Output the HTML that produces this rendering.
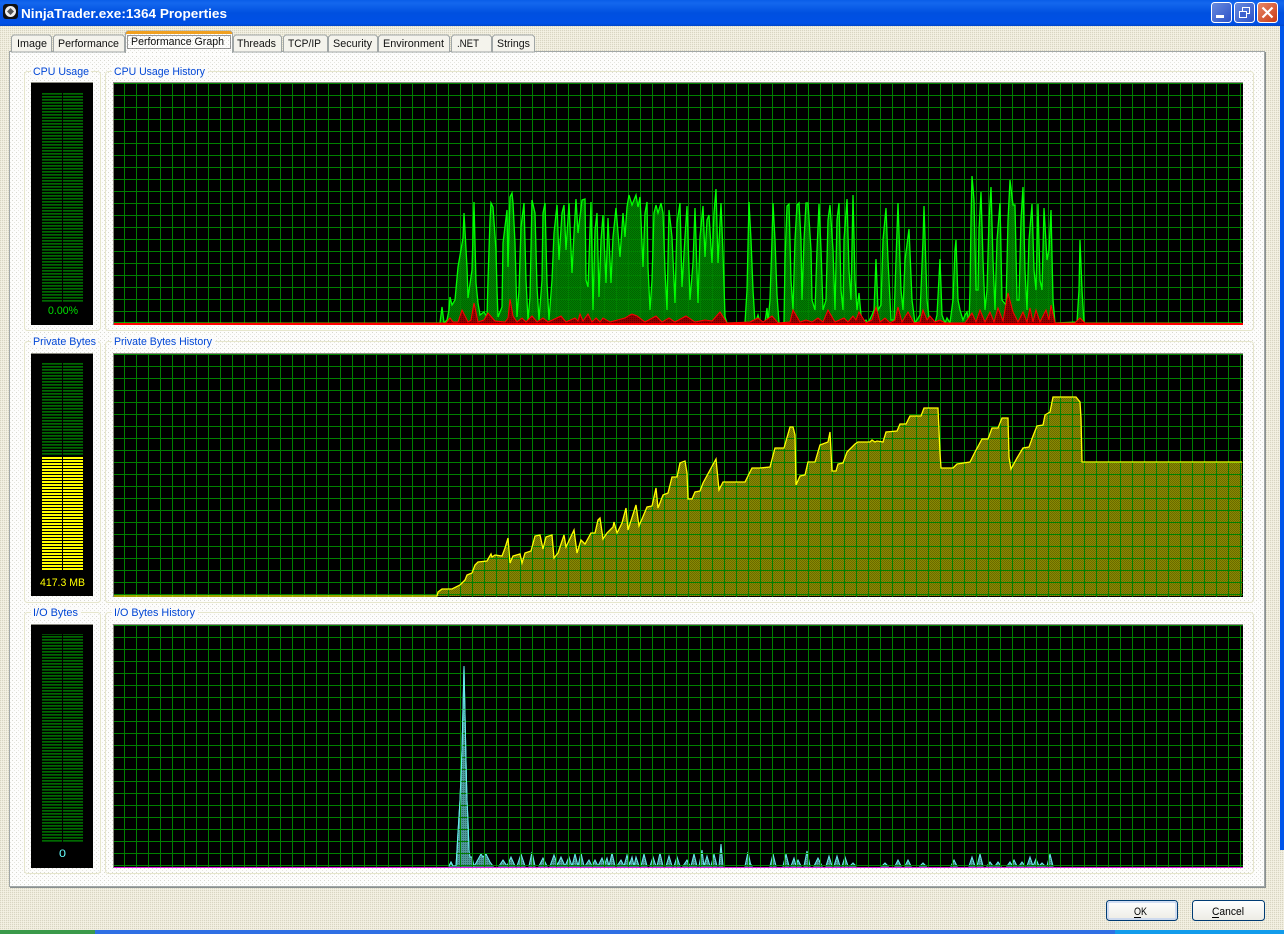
<!DOCTYPE html>
<html>
<head>
<meta charset="utf-8">
<title>NinjaTrader.exe:1364 Properties</title>
<style>
html,body{margin:0;padding:0;width:1284px;height:934px;overflow:hidden;background:#ece9d8}
svg{display:block}
text{font-family:"Liberation Sans",sans-serif;font-size:11px}
.lb{fill:#0046d5}
.tb{fill:#111}
</style>
</head>
<body>
<svg width="1284" height="934" viewBox="0 0 1284 934" xmlns="http://www.w3.org/2000/svg">
<defs>
<pattern id="bg" width="2" height="2" patternUnits="userSpaceOnUse"><rect width="2" height="2" fill="#efecdd"/><rect width="1" height="1" fill="#d8d5c2"/><rect x="1" y="1" width="1" height="1" fill="#f4f2e4"/></pattern>
<pattern id="pn" width="4" height="4" patternUnits="userSpaceOnUse"><rect width="4" height="4" fill="#fdfdfc"/><rect width="1" height="1" fill="#d8d8d0"/><rect x="2" y="2" width="1" height="1" fill="#e6e6e0"/></pattern>
<pattern id="gf" width="2" height="2" patternUnits="userSpaceOnUse"><rect width="2" height="2" fill="#007f00"/><rect width="1" height="1" fill="#006400"/><rect x="1" y="1" width="1" height="1" fill="#006400"/></pattern>
<pattern id="yf" width="2" height="2" patternUnits="userSpaceOnUse"><rect width="2" height="2" fill="#8a8a00"/><rect width="1" height="1" fill="#6a6a00"/><rect x="1" y="1" width="1" height="1" fill="#6a6a00"/></pattern>
<pattern id="rf" width="2" height="2" patternUnits="userSpaceOnUse"><rect width="2" height="2" fill="#900000"/><rect width="1" height="1" fill="#600000"/></pattern>
<pattern id="tf" width="2" height="2" patternUnits="userSpaceOnUse"><rect width="2" height="2" fill="#4f9a9a"/><rect width="1" height="1" fill="#2f6a6a"/></pattern>
<pattern id="mg" width="4" height="3" patternUnits="userSpaceOnUse"><rect y="0" width="4" height="1" fill="#006a00"/><rect y="1" width="4" height="1" fill="#004a00"/></pattern>
<pattern id="my" y="457" width="4" height="3" patternUnits="userSpaceOnUse"><rect y="0" width="4" height="2" fill="#ffff00"/></pattern>
<pattern id="grid1" x="112" y="83" width="12" height="12" patternUnits="userSpaceOnUse"><rect x="0" y="0" width="12" height="1" fill="#008000"/><rect x="0" y="0" width="1" height="12" fill="#008000"/></pattern>
<pattern id="grid2" x="112" y="354" width="12" height="12" patternUnits="userSpaceOnUse"><rect x="0" y="0" width="12" height="1" fill="#008000"/><rect x="0" y="0" width="1" height="12" fill="#008000"/></pattern>
<pattern id="grid3" x="112" y="625" width="12" height="12" patternUnits="userSpaceOnUse"><rect x="0" y="0" width="12" height="1" fill="#008000"/><rect x="0" y="0" width="1" height="12" fill="#008000"/></pattern>
<linearGradient id="tt" x1="0" y1="0" x2="0" y2="1"><stop offset="0" stop-color="#0a5ee8"/><stop offset=".12" stop-color="#1467ee"/><stop offset=".5" stop-color="#0050e0"/><stop offset=".9" stop-color="#0050e6"/><stop offset="1" stop-color="#0046c8"/></linearGradient>
<linearGradient id="wb" x1="0" y1="0" x2="1" y2="1"><stop offset="0" stop-color="#6a8cde"/><stop offset="1" stop-color="#2a50c8"/></linearGradient>
<linearGradient id="wc" x1="0" y1="0" x2="1" y2="1"><stop offset="0" stop-color="#e88a6a"/><stop offset="1" stop-color="#c83a14"/></linearGradient>
<linearGradient id="bt" x1="0" y1="0" x2="0" y2="1"><stop offset="0" stop-color="#ffffff"/><stop offset="1" stop-color="#ecebe4"/></linearGradient>
</defs>

<rect width="1284" height="934" fill="url(#bg)"/>
<rect x="1280" y="0" width="4" height="850" fill="#0055ea"/>
<rect x="0" y="0" width="1284" height="26" fill="url(#tt)"/>

<!-- title icon -->
<rect x="3" y="4" width="15" height="15" rx="3" fill="#111"/>
<circle cx="10.5" cy="11.5" r="5.5" fill="#eee"/>
<path d="M10.5 8l3.5 3.5-3.5 3.5-3.5-3.5z" fill="#555"/>
<text x="21" y="18" fill="#fff" textLength="206" lengthAdjust="spacingAndGlyphs" style="font-size:13px;font-weight:bold">NinjaTrader.exe:1364 Properties</text>

<!-- window buttons -->
<rect x="1211.5" y="2.5" width="20" height="20" rx="3" fill="url(#wb)" stroke="#fff"/>
<rect x="1216" y="15" width="8" height="3" fill="#fff"/>
<rect x="1234.5" y="2.5" width="20" height="20" rx="3" fill="url(#wb)" stroke="#fff"/>
<rect x="1242.5" y="7.5" width="7" height="6" fill="none" stroke="#fff"/>
<rect x="1239.5" y="11.5" width="7" height="6" fill="#3d62cf" stroke="#fff"/>
<rect x="1257.5" y="2.5" width="20" height="20" rx="3" fill="url(#wc)" stroke="#fff"/>
<path d="M1262.5 7.5l10 10M1272.5 7.5l-10 10" stroke="#fff" stroke-width="2.2" fill="none"/>

<!-- tab panel -->
<rect x="9.5" y="51.5" width="1255" height="835" fill="url(#pn)" stroke="#a0a6a6"/>
<path d="M10 887.5h1255.5M1265.5 52v836" stroke="#8a9090" fill="none"/>

<!-- tabs -->
<g fill="#f4f3ec" stroke="#a0a6a6">
<path d="M11.5 52v-15l2-2h36l2 2v15z"/>
<path d="M53.5 52v-15l2-2h67l2 2v15z"/>
<path d="M233.5 52v-15l2-2h44l2 2v15z"/>
<path d="M283.5 52v-15l2-2h40l2 2v15z"/>
<path d="M328.5 52v-15l2-2h45l2 2v15z"/>
<path d="M378.5 52v-15l2-2h67l2 2v15z"/>
<path d="M451.5 52v-15l2-2h36l2 2v15z"/>
<path d="M492.5 52v-15l2-2h38l2 2v15z"/>
</g>
<path d="M125.5 53v-20l2-2h103l2 2v20" fill="url(#pn)" stroke="#a0a6a6"/>
<rect x="126" y="53" width="106" height="2" fill="#fdfdfc"/>
<path d="M126 32.5l2-1.5h102l2 1.500v1.500h-106z" fill="#f0a020"/>
<rect x="127.500" y="35.500" width="103" height="13" fill="none" stroke="#333" stroke-dasharray="1 1"/>
<text class="tb" x="17" y="47" textLength="30" lengthAdjust="spacingAndGlyphs">Image</text>
<text class="tb" x="58" y="47" textLength="61" lengthAdjust="spacingAndGlyphs">Performance</text>
<text class="tb" x="131" y="45" textLength="93" lengthAdjust="spacingAndGlyphs">Performance Graph</text>
<text class="tb" x="237" y="47" textLength="39" lengthAdjust="spacingAndGlyphs">Threads</text>
<text class="tb" x="288" y="47" textLength="33" lengthAdjust="spacingAndGlyphs">TCP/IP</text>
<text class="tb" x="333" y="47" textLength="39" lengthAdjust="spacingAndGlyphs">Security</text>
<text class="tb" x="383" y="47" textLength="61" lengthAdjust="spacingAndGlyphs">Environment</text>
<text class="tb" x="457" y="47" textLength="22" lengthAdjust="spacingAndGlyphs">.NET</text>
<text class="tb" x="497" y="47" textLength="33" lengthAdjust="spacingAndGlyphs">Strings</text>

<!-- group boxes -->
<g fill="none" stroke="#e6e6cc">
<rect x="24.500" y="71.500" width="76" height="259" rx="3"/>
<rect x="24.500" y="341.500" width="76" height="261" rx="3"/>
<rect x="24.500" y="612.500" width="76" height="261" rx="3"/>
<rect x="105.500" y="71.500" width="1148" height="259" rx="3"/>
<rect x="105.500" y="341.500" width="1148" height="261" rx="3"/>
<rect x="105.500" y="612.500" width="1148" height="261" rx="3"/>
</g>
<g fill="#fbfbfa">
<rect x="31" y="66" width="60" height="12"/>
<rect x="31" y="336" width="67" height="12"/>
<rect x="31" y="607" width="50" height="12"/>
<rect x="112" y="66" width="96" height="12"/>
<rect x="112" y="336" width="103" height="12"/>
<rect x="112" y="607" width="86" height="12"/>
</g>
<text class="lb" x="33" y="75" textLength="56" lengthAdjust="spacingAndGlyphs">CPU Usage</text>
<text class="lb" x="114" y="75" textLength="91" lengthAdjust="spacingAndGlyphs">CPU Usage History</text>
<text class="lb" x="33" y="345" textLength="63" lengthAdjust="spacingAndGlyphs">Private Bytes</text>
<text class="lb" x="114" y="345" textLength="98" lengthAdjust="spacingAndGlyphs">Private Bytes History</text>
<text class="lb" x="33" y="616" textLength="45" lengthAdjust="spacingAndGlyphs">I/O Bytes</text>
<text class="lb" x="114" y="616" textLength="81" lengthAdjust="spacingAndGlyphs">I/O Bytes History</text>

<!-- meters -->
<rect x="31" y="82" width="62" height="243" fill="#000"/>
<rect x="31" y="353" width="62" height="243" fill="#000"/>
<rect x="31" y="624" width="62" height="244" fill="#000"/>
<path d="M31 82.500h62M31 353.500h62M31 624.500h62" stroke="#8a8a80"/>
<rect x="42" y="93" width="20" height="209" fill="url(#mg)"/>
<rect x="63" y="93" width="20" height="209" fill="url(#mg)"/>
<rect x="42" y="363" width="20" height="93" fill="url(#mg)"/>
<rect x="63" y="363" width="20" height="93" fill="url(#mg)"/>
<rect x="42" y="457" width="20" height="113" fill="url(#my)"/>
<rect x="63" y="457" width="20" height="113" fill="url(#my)"/>
<rect x="42" y="634" width="20" height="209" fill="url(#mg)"/>
<rect x="63" y="634" width="20" height="209" fill="url(#mg)"/>
<text x="48" y="314" fill="#00e000" textLength="30" lengthAdjust="spacingAndGlyphs">0.00%</text>
<text x="40" y="586" fill="#ffff00" textLength="45" lengthAdjust="spacingAndGlyphs">417.3 MB</text>
<text x="59" y="857" fill="#66ffff" textLength="7" lengthAdjust="spacingAndGlyphs">0</text>

<!-- history 1 -->
<rect x="113" y="82" width="1130" height="243" fill="#000"/>
<path id="c" fill="url(#gf)" d="M113 323L440 323 442 307 444 323 447 320 449 310 450 297 452 305 455 300 458 267 463 238 464 213 467 267 468 298 472 270 474 202 476 283 478 303 480 315 484 312 487 317 488 280 490 220 491 203 493 207 496 250 497 290 498 317 502 307 503 243 507 210 508 267 510 197 512 193 513 203 515 243 517 317 519 290 521 227 524 203 526 280 528 320 530 297 532 200 535 213 537 287 539 320 542 280 543 213 545 203 547 283 549 320 552 280 554 233 557 205 559 260 562 213 564 205 566 250 569 203 572 273 574 233 576 199 578 233 582 200 585 199 586 280 588 287 591 202 593 310 595 230 597 213 599 297 601 240 603 215 606 283 608 218 611 283 613 237 616 208 620 257 623 213 625 237 627 207 629 195 632 205 636 195 638 207 640 197 643 267 645 213 647 202 648 267 650 310 652 280 654 213 656 205 658 213 661 203 663 213 665 270 667 310 669 210 672 237 675 303 677 223 680 203 682 287 685 237 687 206 690 300 693 263 695 208 698 303 700 237 703 206 705 257 707 220 709 215 712 263 714 213 716 189 718 263 721 203 723 253 725 317 727 323 745 323 747 290 749 202 751 240 753 290 755 323 757 318 758 315 760 322 765 322 767 308 768 322 770 300 772 240 773 203 775 240 777 295 779 323 784 323 785 260 787 206 789 204 791 280 793 310 795 240 797 205 799 203 801 240 802 300 804 240 806 203 808 203 811 250 812 300 815 310 817 250 819 204 821 250 823 310 826 300 828 220 830 205 833 250 835 310 837 220 839 203 841 290 843 310 844 240 847 199 849 270 851 300 853 195 855 280 857 310 859 293 861 315 863 322 866 320 868 323 872 315 874 310 876 259 878 310 881 305 883 240 886 208 888 260 891 320 894 320 896 260 898 203 901 290 903 310 905 260 909 229 912 300 915 323 920 315 923 240 924 206 927 300 929 318 931 322 935 323 937 315 940 259 942 315 945 323 947 318 950 323 953 300 955 250 956 240 958 300 960 310 963 320 965 315 967 312 969 323 970 290 971 220 972 176 974 200 976 290 978 290 979 230 981 192 983 260 985 310 987 290 989 220 991 187 993 260 995 310 997 240 1000 203 1002 300 1006 305 1008 220 1010 180 1013 205 1015 205 1017 300 1019 300 1021 220 1023 187 1025 270 1027 310 1029 240 1032 204 1034 270 1036 290 1038 204 1040 280 1042 290 1044 208 1047 260 1049 250 1051 210 1053 300 1055 323 1077 322 1079 290 1080 240 1082 290 1084 323 1242 323Z"/>
<rect x="113" y="83" width="1130" height="241" fill="url(#grid1)"/>
<path fill="none" stroke="#00ff00" stroke-width="1.300" d="M113 323L440 323 442 307 444 323 447 320 449 310 450 297 452 305 455 300 458 267 463 238 464 213 467 267 468 298 472 270 474 202 476 283 478 303 480 315 484 312 487 317 488 280 490 220 491 203 493 207 496 250 497 290 498 317 502 307 503 243 507 210 508 267 510 197 512 193 513 203 515 243 517 317 519 290 521 227 524 203 526 280 528 320 530 297 532 200 535 213 537 287 539 320 542 280 543 213 545 203 547 283 549 320 552 280 554 233 557 205 559 260 562 213 564 205 566 250 569 203 572 273 574 233 576 199 578 233 582 200 585 199 586 280 588 287 591 202 593 310 595 230 597 213 599 297 601 240 603 215 606 283 608 218 611 283 613 237 616 208 620 257 623 213 625 237 627 207 629 195 632 205 636 195 638 207 640 197 643 267 645 213 647 202 648 267 650 310 652 280 654 213 656 205 658 213 661 203 663 213 665 270 667 310 669 210 672 237 675 303 677 223 680 203 682 287 685 237 687 206 690 300 693 263 695 208 698 303 700 237 703 206 705 257 707 220 709 215 712 263 714 213 716 189 718 263 721 203 723 253 725 317 727 323 745 323 747 290 749 202 751 240 753 290 755 323 757 318 758 315 760 322 765 322 767 308 768 322 770 300 772 240 773 203 775 240 777 295 779 323 784 323 785 260 787 206 789 204 791 280 793 310 795 240 797 205 799 203 801 240 802 300 804 240 806 203 808 203 811 250 812 300 815 310 817 250 819 204 821 250 823 310 826 300 828 220 830 205 833 250 835 310 837 220 839 203 841 290 843 310 844 240 847 199 849 270 851 300 853 195 855 280 857 310 859 293 861 315 863 322 866 320 868 323 872 315 874 310 876 259 878 310 881 305 883 240 886 208 888 260 891 320 894 320 896 260 898 203 901 290 903 310 905 260 909 229 912 300 915 323 920 315 923 240 924 206 927 300 929 318 931 322 935 323 937 315 940 259 942 315 945 323 947 318 950 323 953 300 955 250 956 240 958 300 960 310 963 320 965 315 967 312 969 323 970 290 971 220 972 176 974 200 976 290 978 290 979 230 981 192 983 260 985 310 987 290 989 220 991 187 993 260 995 310 997 240 1000 203 1002 300 1006 305 1008 220 1010 180 1013 205 1015 205 1017 300 1019 300 1021 220 1023 187 1025 270 1027 310 1029 240 1032 204 1034 270 1036 290 1038 204 1040 280 1042 290 1044 208 1047 260 1049 250 1051 210 1053 300 1055 323 1077 322 1079 290 1080 240 1082 290 1084 323 1242 323"/>
<path fill="url(#rf)" stroke="#ff0000" d="M113 323.500L446 323 450 318 453 322 458 322 462 310 468 322 471 320 474 303 478 322 484 320 488 313 495 321 505 322 508 318 510 299 513 316 517 322 522 318 526 322 532 316 537 322 543 318 548 322 561 316 566 322 575 318 578 321 580 314 583 321 588 314 592 322 596 318 600 322 603 318 610 322 625 318 630 315 632 314 637 316 645 322 656 316 662 322 669 318 675 322 686 316 695 322 705 320 712 321 720 312 727 323 750 322 758 318 763 322 772 316 778 323 790 322 793 310 800 322 806 320 812 322 818 318 823 322 828 310 835 322 844 318 848 322 853 316 856 320 859 312 866 323 872 320 876 307 880 322 885 318 890 323 895 320 898 307 902 322 908 312 914 323 920 322 923 310 927 320 930 316 935 322 940 320 945 323 965 323 972 313 976 322 980 310 985 322 990 312 994 322 998 308 1003 321 1008 293 1013 312 1018 322 1023 312 1027 322 1030 308 1033 322 1036 310 1040 322 1046 310 1049 320 1051 305 1055 323 1075 323 1080 318 1085 323 1242 323.500Z"/>
<rect x="113" y="323" width="1130" height="2" fill="#ff0000"/>
<path d="M113 82.500h1130M113.500 82v243" stroke="#8a8a80" fill="none"/>

<!-- history 2 -->
<rect x="113" y="353" width="1130" height="244" fill="#000"/>
<path fill="url(#yf)" d="M113 596L437 596 438 592 442 589 452 589 460 585 465 580 467 575 472 573 475 565 478 562 487 561 491 554 492 557 495 555 502 556 505 548 508 538 510 563 513 556 520 554 522 563 525 553 531 551 535 536 540 535 543 549 546 537 552 535 554 558 558 553 564 535 566 547 574 530 577 553 581 540 585 544 591 533 595 533 598 520 600 518 603 539 607 533 613 527 614 522 617 533 622 523 626 508 628 530 636 505 639 526 647 507 652 506 656 488 658 508 663 495 668 493 672 477 677 477 680 463 685 461 687 473 688 499 692 499 695 492 700 491 703 483 710 470 716 459 719 490 723 482 745 482 752 468 757 468 760 468 770 467 775 448 784 448 790 427 793 427 795 435 796 485 800 476 805 475 808 462 815 462 820 445 828 442 830 432 832 471 836 471 838 464 843 463 847 452 855 444 858 442 870 442 872 440 875 442 877 441 883 442 886 432 897 431 900 424 906 424 910 416 921 416 924 408 938 408 940 453 941 468 953 468 957 464 970 462 975 452 982 439 988 439 992 428 998 428 1002 418 1008 418 1009 457 1011 469 1017 458 1023 448 1029 447 1033 436 1037 426 1043 425 1045 415 1050 412 1053 397 1076 397 1080 402 1081 418 1082 462 1242 462 1242 596Z"/>
<rect x="113" y="354" width="1130" height="243" fill="url(#grid2)"/>
<path fill="none" stroke="#ffff00" stroke-width="1.300" d="M113 596L437 596 438 592 442 589 452 589 460 585 465 580 467 575 472 573 475 565 478 562 487 561 491 554 492 557 495 555 502 556 505 548 508 538 510 563 513 556 520 554 522 563 525 553 531 551 535 536 540 535 543 549 546 537 552 535 554 558 558 553 564 535 566 547 574 530 577 553 581 540 585 544 591 533 595 533 598 520 600 518 603 539 607 533 613 527 614 522 617 533 622 523 626 508 628 530 636 505 639 526 647 507 652 506 656 488 658 508 663 495 668 493 672 477 677 477 680 463 685 461 687 473 688 499 692 499 695 492 700 491 703 483 710 470 716 459 719 490 723 482 745 482 752 468 757 468 760 468 770 467 775 448 784 448 790 427 793 427 795 435 796 485 800 476 805 475 808 462 815 462 820 445 828 442 830 432 832 471 836 471 838 464 843 463 847 452 855 444 858 442 870 442 872 440 875 442 877 441 883 442 886 432 897 431 900 424 906 424 910 416 921 416 924 408 938 408 940 453 941 468 953 468 957 464 970 462 975 452 982 439 988 439 992 428 998 428 1002 418 1008 418 1009 457 1011 469 1017 458 1023 448 1029 447 1033 436 1037 426 1043 425 1045 415 1050 412 1053 397 1076 397 1080 402 1081 418 1082 462 1242 462"/>
<path d="M113 353.500h1130M113.500 353v244" stroke="#8a8a80" fill="none"/>

<!-- history 3 -->
<rect x="113" y="624" width="1130" height="244" fill="#000"/>
<path fill="url(#tf)" stroke="#66eeee" d="M449 866L451 862 453 866 456 866 457 850 458 832 460 800 462 750 464 666 466 760 467 800 468 820 469 850 470 857 472 857 474 866 476 863 481 854 483 857 486 854 490 862 493 866Z
M499 866l4-6 4 6zM507 866l4-9 4 9zM517 866l4-12 4 12zM529 866l3-14 3 14zM539 866l4-8 4 8zM550 866l4-11 4 11zM557 866l4-9 4 9zM565 866l4-9 3 9zM572 866l3-12 3 12zM578 866l3-13 3 13zM585 866l4-6 3 6zM592 866l3-6 3 6zM598 866l4-8 3 8zM604 866l3-8 2 8zM609 866l3-13 3 13zM617 866l4-6 3 6zM624 866l3-11 3 11zM629 866l3-9 2 9zM634 866l2-9 3 9zM641 866l3-12 3 12zM650 866l3-9 3 9zM657 866l3-13 3 13zM666 866l3-10 3 10zM674 866l3-9 3 9zM683 866l4-6 3 6zM691 866l3-12 3 12zM699 866l3-16 2 16zM704 866l3-10 3 10zM711 866l3-12 3 12zM719 866l2-22 2 22zM745 866l3-14 3 14zM748 866l2-3 2 3zM770 866l3-12 3 12zM783 866l3-12 3 12zM791 866l3-8 2 8zM795 866l3-6 3 6zM804 866l3-15 3 15zM814 866l4-8 4 8zM826 866l3-10 3 10zM834 866l3-10 3 10zM842 866l3-9 3 9zM850 866l3-3 3 3zM882 866l3-3 3 3zM895 866l3-6 3 6zM905 866l3-6 3 6zM920 866l3-3 3 3zM951 866l3-6 3 6zM969 866l3-9 3 9zM977 866l3-12 3 12zM987 866l3-4 3 4zM995 866l3-4 3 4zM1007 866l3-4 2 4zM1011 866l3-6 3 6zM1019 866l3-4 3 4zM1027 866l3-9 3 9zM1033 866l3-7 3 7zM1039 866l3-3 3 3zM1047 866l3-12 3 12z"/>
<rect x="113" y="625" width="1130" height="242" fill="url(#grid3)"/>
<path d="M449 866L451 862 453 866 456 866 457 850 458 832 460 800 462 750 464 666 466 760 467 800 468 820 469 850" fill="none" stroke="#66eeee"/>
<rect x="113" y="867" width="1130" height="1" fill="#e020e0"/>
<path d="M113 624.500h1130M113.500 624v244" stroke="#8a8a80" fill="none"/>

<!-- buttons -->
<rect x="1106.500" y="900.500" width="71" height="20" rx="3" fill="url(#bt)" stroke="#003c74"/>
<rect x="1108" y="902" width="68" height="17" rx="2" fill="none" stroke="#c4d4f0" stroke-width="1.500"/>
<text x="1134" y="915" fill="#000" textLength="13" lengthAdjust="spacingAndGlyphs">OK</text>
<rect x="1134" y="917" width="7" height="1" fill="#000"/>
<rect x="1192.500" y="900.500" width="72" height="20" rx="3" fill="url(#bt)" stroke="#003c74"/>
<text x="1212" y="915" fill="#000" textLength="32" lengthAdjust="spacingAndGlyphs">Cancel</text>
<rect x="1212" y="917" width="7" height="1" fill="#000"/>

<!-- bottom strip -->
<rect x="0" y="930" width="95" height="4" fill="#3a9a4a"/>
<rect x="95" y="930" width="1020" height="4" fill="#2f6fe4"/>
<rect x="1115" y="930" width="169" height="4" fill="#129ceb"/>
</svg>
</body>
</html>
